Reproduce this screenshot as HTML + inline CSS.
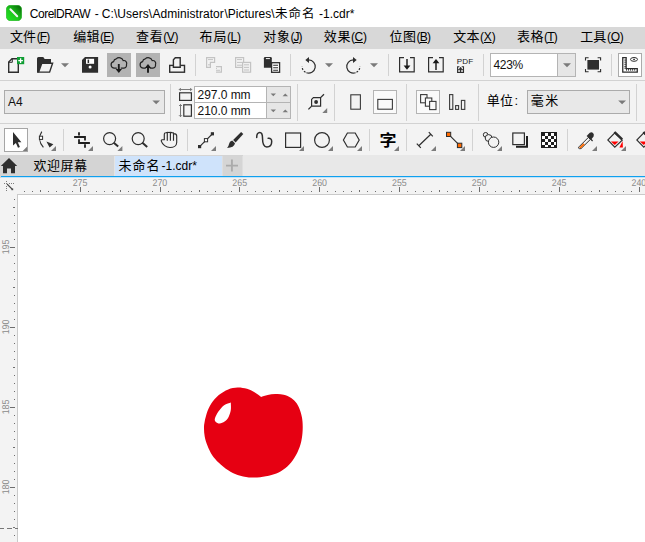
<!DOCTYPE html>
<html lang="zh">
<head>
<meta charset="utf-8">
<title>CorelDRAW</title>
<style>
*{box-sizing:border-box;margin:0;padding:0}
html,body{width:645px;height:542px;overflow:hidden;background:#fff}
body{position:relative;font-family:"Liberation Sans","Noto Sans CJK SC",sans-serif;color:#000}
.abs{position:absolute}
#title{left:0;top:0;width:645px;height:27px;background:#fff}
#title .t{position:absolute;top:6px;font-size:12px;line-height:16px;white-space:pre}
#menu{left:0;top:27px;width:645px;height:22px;background:#d8d8d8}
#menu span{position:absolute;white-space:pre}
#menu .c{top:1px;font-size:13px;line-height:18px}
#menu .l{top:1px;font-size:12px;line-height:18px}
#tb1{left:0;top:49px;width:645px;height:32px;background:#f3f3f3;border-bottom:1px solid #d2d2d2}
#pb{left:0;top:81px;width:645px;height:43px;background:#f3f3f3;border-bottom:1px solid #d2d2d2}
#tools{left:0;top:124px;width:645px;height:31px;background:#f3f3f3}
#tabs{left:0;top:155px;width:645px;height:23px;background:#d4d4d4}
#bl1{left:1px;top:176px;width:644px;height:1px;background:#0fa0ee}
#bl2{left:1px;top:177px;width:644px;height:1px;background:#c2e3f8}
#hruler{left:0;top:178px;width:645px;height:17px;background:#f3f3f3}
#vruler{left:0;top:195px;width:17px;height:347px;background:#f3f3f3}
#canvas{left:17px;top:194px;width:628px;height:348px;background:#fff;border-left:1px solid #cacaca;border-top:1px solid #cacaca}
.sep{position:absolute;width:1px;background:#c8c8c8}
svg{position:absolute;overflow:hidden}
.cj{font-size:13px;line-height:18px;white-space:pre}
</style>
</head>
<body>
<div id="title" class="abs">
  <svg style="left:6px;top:5px" width="16" height="16" viewBox="0 0 16 16"><defs><linearGradient id="lg" x1="0" y1="1" x2="1" y2="0"><stop offset="0" stop-color="#25e625"/><stop offset="0.45" stop-color="#1cc81c"/><stop offset="1" stop-color="#075a07"/></linearGradient></defs><rect x="0.3" y="0.3" width="15.4" height="15.4" rx="4.2" fill="url(#lg)" stroke="#1fae1f" stroke-width="0.6"/><path d="M4.4 4.3 L11.2 11.3" stroke="#f4f4f4" stroke-width="2" stroke-linecap="round"/></svg>
  <span class="t" style="left:29.8px;letter-spacing:-0.5px">CorelDRAW</span>
  <span class="t" style="left:94.8px">-</span>
  <span class="t" style="left:101.8px;letter-spacing:0.05px">C:\Users\</span>
  <span class="t" style="left:152.5px;letter-spacing:0.05px">Administrator</span>
  <span class="t" style="left:224.5px">\Pictures\</span>
  <span class="t" style="left:275px;font-size:12.5px;letter-spacing:0.95px">未命名</span>
  <span class="t" style="left:319.1px">-1.cdr*</span>
</div>
<div id="menu" class="abs">
  <span class="c" style="left:10.1px;letter-spacing:0.0px">文件</span><span class="l" style="left:36.7px;letter-spacing:-0.85px">(<u>F</u>)</span>
  <span class="c" style="left:73.3px;letter-spacing:0.1px">编辑</span><span class="l" style="left:100px;letter-spacing:-0.85px">(<u>E</u>)</span>
  <span class="c" style="left:136.1px;letter-spacing:0.6px">查看</span><span class="l" style="left:163.3px;letter-spacing:-0.45px">(<u>V</u>)</span>
  <span class="c" style="left:199.6px;letter-spacing:0.8px">布局</span><span class="l" style="left:227px;letter-spacing:-0.4px">(<u>L</u>)</span>
  <span class="c" style="left:263.2px;letter-spacing:0.8px">对象</span><span class="l" style="left:290.4px;letter-spacing:-1.0px">(<u>J</u>)</span>
  <span class="c" style="left:323.8px;letter-spacing:0.6px">效果</span><span class="l" style="left:351px;letter-spacing:-0.4px">(<u>C</u>)</span>
  <span class="c" style="left:389.5px;letter-spacing:0.6px">位图</span><span class="l" style="left:416.4px;letter-spacing:-0.7px">(<u>B</u>)</span>
  <span class="c" style="left:453.3px;letter-spacing:0.1px">文本</span><span class="l" style="left:480px;letter-spacing:-0.15px">(<u>X</u>)</span>
  <span class="c" style="left:517px;letter-spacing:0.5px">表格</span><span class="l" style="left:544.1px;letter-spacing:-0.8px">(<u>T</u>)</span>
  <span class="c" style="left:580.2px;letter-spacing:0.1px">工具</span><span class="l" style="left:607.1px;letter-spacing:-0.35px">(<u>O</u>)</span>
</div>
<div id="tb1" class="abs"></div>
<svg style="left:0;top:49px" width="645" height="32" viewBox="0 49 645 32">
  <g fill="none" stroke="#2e2e2e" stroke-width="1.4">
    <!-- new -->
    <path d="M12 58.7 H18.3 V72.2 H8.7 V62 Z" fill="#f3f3f3"/>
    <path d="M12.3 58.7 V62.3 H8.7" stroke-width="1"/>
    <rect x="17" y="57" width="7.2" height="7.2" fill="#0f9d33" stroke="none"/>
    <path d="M20.6 58.3 V62.9 M18.3 60.6 H22.9" stroke="#fff" stroke-width="1.3"/>
    <!-- open -->
    <path d="M37 72.8 V58.5 Q37 57 38.5 57 H42.5 Q43.7 57 44.2 58.2 L44.6 59 H51 V63 H42 L38.5 72.8 Z" fill="#2e2e2e" stroke="none"/>
    <path d="M41.8 63.2 H52.6 L49.6 72.1 H38.6 Z" fill="#f3f3f3" stroke-width="1.4"/>
    <!-- save -->
    <path d="M85 57 H98.1 V72.8 H82 V60 Z" fill="#2e2e2e" stroke="none"/>
    <rect x="86" y="58.8" width="8.1" height="5" fill="#fff" stroke="none"/>
    <rect x="87.6" y="59.6" width="1.5" height="3.4" fill="#2e2e2e" stroke="none"/>
    <circle cx="90.1" cy="66.9" r="1.5" fill="#fff" stroke="none"/>
  </g>
  <path d="M61 63.2 H69 L65 67.2 Z" fill="#7a7a7a"/>
  <!-- cloud buttons -->
  <rect x="107" y="53" width="24" height="24" fill="#b3b3b3"/>
  <rect x="136" y="53" width="24" height="24" fill="#b3b3b3"/>
  <g fill="none" stroke="#222" stroke-width="1.2" stroke-linecap="round">
    <path id="cloud" d="M116.4 68.1 H114.4 A3.3 3.3 0 0 1 113.6 61.6 A3.2 3.2 0 0 1 116.2 58.9 A4.3 4.3 0 0 1 123.2 60.6 A2.9 2.9 0 0 1 126.5 64.6 A3.1 3.1 0 0 1 123.9 68.1 H121.2"/>
    <path d="M145.4 68.1 H143.4 A3.3 3.3 0 0 1 142.6 61.6 A3.2 3.2 0 0 1 145.2 58.9 A4.3 4.3 0 0 1 152.2 60.6 A2.9 2.9 0 0 1 155.5 64.6 A3.1 3.1 0 0 1 152.9 68.1 H150.2"/>
  </g>
  <path d="M118.8 64 V70" stroke="#1a1a1a" stroke-width="1.9" fill="none"/>
  <path d="M115.6 69 H122 L118.8 73 Z" fill="#1a1a1a"/>
  <path d="M148 72.8 V67" stroke="#1a1a1a" stroke-width="1.9" fill="none"/>
  <path d="M144.8 68 H151.2 L148 63.9 Z" fill="#1a1a1a"/>
  <!-- print -->
  <g fill="#f3f3f3" stroke="#2e2e2e" stroke-width="1.4">
    <rect x="169.7" y="65.4" width="14.8" height="6.8"/>
    <path d="M175.3 57.7 H180.2 V67.3 H173.4 V59.8 Z"/>
  </g>
  <!-- seps -->
  <rect x="195" y="54" width="1" height="22" fill="#d2d2d2"/>
  <rect x="290" y="54" width="1" height="22" fill="#d2d2d2"/>
  <rect x="388" y="54" width="1" height="22" fill="#d2d2d2"/>
  <rect x="483" y="54" width="1" height="22" fill="#d2d2d2"/>
  <rect x="611" y="54" width="1" height="22" fill="#d2d2d2"/>
  <!-- cut (disabled) -->
  <g fill="none" stroke="#c3c3c3" stroke-width="1.2">
    <path d="M206.6 57.6 H214.6 V62.4 H210.4 V67.4 H206.6 Z"/>
    <path d="M208 59.6 H213 M208 64.8 H210" stroke-width="1"/>
    <path d="M216 66.6 H221.4 V72.2 H216" />
    <path d="M216 68.4 H217 M218 66.6 H219 M216 70.3 H220" stroke-width="1"/>
    <!-- copy disabled -->
    <rect x="235.6" y="57.6" width="8" height="9.8"/>
    <path d="M237 59.6 H242 M237 62.4 H242 M237 65.2 H242" stroke-width="1"/>
    <rect x="242.6" y="62.4" width="8" height="9.8" fill="#f0f0f0"/>
    <path d="M244 64.8 H249 M244 67.4 H249 M244 70 H249" stroke-width="1"/>
  </g>
  <!-- paste -->
  <path d="M263.9 67.7 V58.2 Q263.9 57 265.1 57 H270.6 Q271.8 57 271.8 58.2 V67.7 Z" fill="#2e2e2e"/>
  <rect x="265.9" y="58" width="4" height="1.1" fill="#e8e8e8"/>
  <rect x="271.6" y="62.7" width="8" height="9.6" fill="#fff" stroke="#2e2e2e" stroke-width="1.3"/>
  <path d="M273.2 65.2 H278 M273.2 67.7 H278 M273.2 70.2 H278" stroke="#2e2e2e" stroke-width="1.1"/>
  <!-- undo -->
  <g fill="none" stroke="#2e2e2e" stroke-width="1.2">
    <path d="M308.7 59.9 A6.6 6.6 0 1 1 306.4 72.7"/>
    <path d="M306.4 72.7 A6.6 6.6 0 0 1 302.1 66.3" stroke-dasharray="1.9 1.5" stroke-dashoffset="-1"/>
    <path d="M353.3 59.9 A6.6 6.6 0 1 0 355.6 72.7"/>
    <path d="M355.6 72.7 A6.6 6.6 0 0 0 359.9 66.3" stroke-dasharray="1.9 1.5" stroke-dashoffset="-1"/>
  </g>
  <path d="M309 56.9 V62.9 L305.3 59.9 Z" fill="#2e2e2e"/>
  <path d="M353 56.9 V62.9 L356.7 59.9 Z" fill="#2e2e2e"/>
  <path d="M325 63.2 H333 L329 67.2 Z" fill="#7a7a7a"/>
  <path d="M370 63.2 H378 L374 67.2 Z" fill="#7a7a7a"/>
  <!-- import / export -->
  <g fill="none" stroke="#2e2e2e" stroke-width="1.2">
    <path d="M404 57.6 H399.6 V71.8 H414.2 V57.6 H410"/>
    <path d="M433 57.6 H428.6 V71.8 H443.2 V57.6 H439"/>
    <path d="M407 59 V67" stroke-width="1.6"/>
    <path d="M436 70 V62" stroke-width="1.6"/>
  </g>
  <path d="M403.6 65.6 H410.4 L407 69.8 Z" fill="#1a1a1a"/>
  <path d="M432.6 63.2 H439.4 L436 59 Z" fill="#1a1a1a"/>
  <!-- PDF -->
  <text x="456.7" y="63.8" font-family="Liberation Sans, sans-serif" font-size="8.1" fill="#1a1a1a" letter-spacing="0.1">PDF</text>
  <path d="M459.4 66.7 H457.6 V72.4 H463.5 V66.7 H461.7 M457.6 69.8 H463.5" fill="none" stroke="#2e2e2e" stroke-width="1.1"/>
  <path d="M460.55 67.4 V72.4" fill="none" stroke="#2e2e2e" stroke-width="1.1"/>
  <path d="M458.5 69.4 L460.55 66.9 L462.6 69.4 Z" fill="#2e2e2e"/>
  <!-- zoom combo -->
  <rect x="490.5" y="53.5" width="85" height="23" fill="#fff" stroke="#b4b4b4" stroke-width="1"/>
  <rect x="557.5" y="53.5" width="18" height="23" fill="#e6e6e6" stroke="#b4b4b4" stroke-width="1"/>
  <path d="M563 63.2 H571 L567 67.2 Z" fill="#7a7a7a"/>
  <text x="493.5" y="69" font-family="Liberation Sans, sans-serif" font-size="12" fill="#111" letter-spacing="-0.3">423%</text>
  <!-- full screen -->
  <rect x="587.4" y="60" width="11.6" height="9.6" fill="#2e2e2e"/>
  <path d="M585.5 60.6 V57.8 H588.6 M597.6 57.8 H600.6 V60.6 M600.6 69 V71.8 H597.6 M588.6 71.8 H585.5 V69" fill="none" stroke="#2e2e2e" stroke-width="1.1"/>
  <!-- ruler button -->
  <rect x="618.5" y="53.5" width="23" height="23" fill="#fff" stroke="#ababab" stroke-width="1"/>
  <path d="M622.75 57.55 H626.15 V68.65 H637.25 V72.15 H622.75 Z" fill="#fff" stroke="#2e2e2e" stroke-width="1.3"/>
  <path d="M624.3 60.1 H626 M624.3 62.2 H626 M624.3 64.3 H626 M624.3 66.4 H626 M624.3 68.2 H626 M626.5 68.8 V70.7 M628.5 68.8 V70.7 M630.6 68.8 V70.7 M632.6 68.8 V70.7 M634.7 68.8 V70.7" stroke="#2e2e2e" stroke-width="0.9" fill="none"/>
  <ellipse cx="634" cy="59.4" rx="3.5" ry="1.9" fill="#fff" stroke="#2e2e2e" stroke-width="1"/>
  <rect x="633.2" y="58.8" width="1.7" height="1.2" fill="#2e2e2e"/>
</svg>
<div id="pb" class="abs"></div>
<svg style="left:0;top:81px" width="645" height="42" viewBox="0 81 645 42">
  <!-- A4 combo -->
  <rect x="4.5" y="90.5" width="160" height="23" fill="#e8e8e8" stroke="#ababab" stroke-width="1"/>
  <text x="8" y="106.3" font-family="Liberation Sans, sans-serif" font-size="12" fill="#111">A4</text>
  <path d="M152.4 100.4 H160 L156.2 104.2 Z" fill="#7a7a7a"/>
  <!-- seps -->
  <rect x="170" y="84" width="1" height="37" fill="#d2d2d2"/>
  <rect x="297" y="84" width="1" height="37" fill="#d2d2d2"/>
  <rect x="334" y="84" width="1" height="37" fill="#d2d2d2"/>
  <rect x="406" y="84" width="1" height="37" fill="#d2d2d2"/>
  <rect x="478" y="84" width="1" height="37" fill="#d2d2d2"/>
  <rect x="636" y="84" width="1" height="37" fill="#d2d2d2"/>
  <!-- w/h icons -->
  <g fill="none" stroke="#6a6a6a" stroke-width="0.9">
    <path d="M179.4 89.5 H191.6 M180.8 88 L179.3 89.5 L180.8 91 M190.2 88 L191.7 89.5 L190.2 91"/>
    <path d="M180.5 104.6 V116.6 M179 106 L180.5 104.5 L182 106 M179 115.2 L180.5 116.7 L182 115.2"/>
  </g>
  <g fill="none" stroke="#333" stroke-width="1.2">
    <rect x="179.6" y="92.8" width="11.8" height="7.6"/>
    <rect x="183.8" y="104.8" width="7.6" height="11.4"/>
  </g>
  <!-- fields -->
  <rect x="194.5" y="86.5" width="96" height="16" fill="#fff" stroke="#b4b4b4" stroke-width="1"/>
  <rect x="194.5" y="102.5" width="96" height="16" fill="#fff" stroke="#b4b4b4" stroke-width="1"/>
  <rect x="266.5" y="86.5" width="24" height="16" fill="#e6e6e6" stroke="#b4b4b4" stroke-width="1"/>
  <rect x="266.5" y="102.5" width="24" height="16" fill="#e6e6e6" stroke="#b4b4b4" stroke-width="1"/>
  <path d="M270.6 93.4 H276 L273.3 96.2 Z M282.6 96.2 H288 L285.3 93.4 Z M270.6 109.4 H276 L273.3 112.2 Z M282.6 112.2 H288 L285.3 109.4 Z" fill="#7a7a7a"/>
  <text x="197.6" y="99" font-family="Liberation Sans, sans-serif" font-size="12" fill="#111" letter-spacing="-0.05">297.0 mm</text>
  <text x="197.6" y="115" font-family="Liberation Sans, sans-serif" font-size="12" fill="#111" letter-spacing="-0.05">210.0 mm</text>
  <!-- page frame icon -->
  <g fill="none" stroke="#2e2e2e" stroke-width="1.2">
    <path d="M313.4 97.6 H320.6 V106.2 H311.6 V99.4 Z"/>
    <path d="M308.4 109.4 L311.4 106.4 M320.8 97.4 L324 94.2" stroke-width="1.3"/>
  </g>
  <circle cx="316.1" cy="102" r="1.9" fill="#2e2e2e"/>
  <path d="M327.2 108 V112.9 H322.3 Z" fill="#7c7c7c"/>
  <!-- portrait -->
  <rect x="350.8" y="94.8" width="9.6" height="14.4" fill="none" stroke="#3a3a3a" stroke-width="1.1"/>
  <!-- landscape (active) -->
  <rect x="373.5" y="90.5" width="23" height="23" fill="#fafafa" stroke="#b4b4b4" stroke-width="1"/>
  <rect x="377.8" y="99.4" width="14.6" height="9.8" fill="none" stroke="#3a3a3a" stroke-width="1.1"/>
  <!-- all pages (active) -->
  <rect x="416.5" y="90.5" width="23" height="23" fill="#fafafa" stroke="#b4b4b4" stroke-width="1"/>
  <g fill="#fafafa" stroke="#3a3a3a" stroke-width="1.1">
    <rect x="420.6" y="94.6" width="6.4" height="8.2"/>
    <rect x="425.4" y="98" width="6.4" height="8.2"/>
    <rect x="429.6" y="101.4" width="6.4" height="8.2"/>
  </g>
  <!-- current page -->
  <g fill="none" stroke="#3a3a3a" stroke-width="1.1">
    <rect x="449.6" y="94.6" width="3.2" height="14.8"/>
    <rect x="455.6" y="105.6" width="3" height="3.8"/>
    <rect x="461.4" y="100.4" width="3.4" height="9"/>
  </g>
  <!-- units -->
  <rect x="527.5" y="90.5" width="102" height="23" fill="#e8e8e8" stroke="#ababab" stroke-width="1"/>
  <path d="M618.2 100.4 H626 L622.1 104.2 Z" fill="#7a7a7a"/>
</svg>
<span class="abs cj" style="left:486.8px;top:92px;letter-spacing:0.3px">单位</span><span class="abs cj" style="left:514.4px;top:92px">:</span>
<span class="abs cj" style="left:530.8px;top:92px;letter-spacing:1.4px">毫米</span>
<div id="tools" class="abs"></div>
<svg style="left:0;top:123px" width="645" height="32" viewBox="0 123 645 32">
  <!-- pick -->
  <rect x="4.5" y="128.5" width="23" height="23" fill="#fff" stroke="#a6a6a6" stroke-width="1"/>
  <path d="M13 132 V145.6 L15.9 143 L18 147.8 L19.9 146.9 L17.8 142.2 H21.4 Z" fill="#2e2e2e"/>
  <path d="M27.2 146.6 V151.1 H22.7 Z" fill="#7c7c7c"/>
  <!-- shape -->
  <path d="M41.8 131.6 Q36.6 139.5 43.4 147.4" fill="none" stroke="#2e2e2e" stroke-width="1.1"/>
  <rect x="39.4" y="136.2" width="3.2" height="3.2" fill="#fff" stroke="#2e2e2e" stroke-width="1"/>
  <path d="M46.4 141.6 L53.4 144.2 L49.6 147.6 Z" fill="#2e2e2e"/>
  <path d="M56.0 146 V151 H51.0 Z" fill="#7c7c7c"/>
  <!-- seps -->
  <rect x="63" y="129" width="1" height="22" fill="#d2d2d2"/>
  <rect x="187" y="129" width="1" height="22" fill="#d2d2d2"/>
  <rect x="369" y="129" width="1" height="22" fill="#d2d2d2"/>
  <rect x="406" y="129" width="1" height="22" fill="#d2d2d2"/>
  <rect x="472" y="129" width="1" height="22" fill="#d2d2d2"/>
  <rect x="567" y="129" width="1" height="22" fill="#d2d2d2"/>
  <!-- crop -->
  <path d="M74.1 137 H85 V140.6 M79 132.2 V135.6 M79 139.2 V143 H89.9 M85 144.2 V147.7" fill="none" stroke="#1f1f1f" stroke-width="1.8"/>
  <path d="M93.0 146 V151 H88.0 Z" fill="#7c7c7c"/>
  <!-- zoom -->
  <g fill="none" stroke="#2e2e2e">
    <circle cx="109.6" cy="138.6" r="6" stroke-width="1.2"/>
    <path d="M113.8 142.8 L118.2 146.6" stroke-width="2"/>
    <circle cx="138.2" cy="138.6" r="6" stroke-width="1.2"/>
    <path d="M142.4 142.8 L147.2 147" stroke-width="2"/>
  </g>
  <path d="M122.4 146 V151 H117.4 Z" fill="#7c7c7c"/>
  <!-- hand -->
  <path d="M162.2 139.7 H164.3 V134.2 Q164.3 132.7 165.8 132.7 Q167.3 132.3 168.9 132.5 Q170.4 132.2 172 132.6 Q173.6 132.6 173.9 133.6 Q176.7 133.6 176.7 136 V142.4 C176.7 145.8 173.4 147.5 170 147.5 C166 147.5 162.5 144.6 161.4 141.4 Q160.9 140 162.2 139.7 Z M167.3 133 V140.7 M170.4 132.8 V140.7 M173.5 133.2 V140.7" fill="none" stroke="#2e2e2e" stroke-width="1.15" stroke-linejoin="round"/>
  <!-- freehand -->
  <path d="M199.6 146.6 L212.4 133.8" stroke="#2e2e2e" stroke-width="1.2" fill="none"/>
  <rect x="198" y="145" width="3.2" height="3.2" fill="#2e2e2e"/>
  <rect x="210.8" y="132.2" width="3.2" height="3.2" fill="#2e2e2e"/>
  <rect x="204.4" y="138.6" width="3.2" height="3.2" fill="#fff" stroke="#2e2e2e" stroke-width="1"/>
  <path d="M216.0 146 V151 H211.0 Z" fill="#7c7c7c"/>
  <!-- brush -->
  <path d="M241.1 132.1 L243.3 134 L235.6 142.4 L233.1 140 Z" fill="#2e2e2e"/>
  <path d="M232.2 140.5 L235 143.3 Q234.6 145.6 232.6 146.8 Q230.4 147.9 227.1 147.9 Q228.8 146 229.1 143.8 Q229.4 141.4 232.2 140.5 Z" fill="#2e2e2e"/>
  <!-- S curve -->
  <path d="M256.7 137.6 C256.6 134 258 132.5 259.8 132.5 C262 132.5 262.5 134.4 262.5 138 C262.5 143 263.4 146.9 266.8 146.9 C270 146.9 271.7 144.4 271.7 141.4 C271.7 139.4 270.6 138 268.2 138.3" fill="none" stroke="#2e2e2e" stroke-width="1.5" stroke-linecap="round"/>
  <!-- rectangle -->
  <rect x="285.6" y="133" width="15" height="14.4" fill="none" stroke="#2e2e2e" stroke-width="1.2"/>
  <path d="M304 146 V151 H299.0 Z" fill="#7c7c7c"/>
  <!-- ellipse -->
  <circle cx="322" cy="140" r="7.4" fill="none" stroke="#2e2e2e" stroke-width="1.2"/>
  <path d="M333.0 146 V151 H328.0 Z" fill="#7c7c7c"/>
  <!-- polygon -->
  <path d="M343.4 140 L347.4 133 H355.2 L359.2 140 L355.2 147 H347.4 Z" fill="none" stroke="#2e2e2e" stroke-width="1.2"/>
  <path d="M362.0 146 V151 H357.0 Z" fill="#7c7c7c"/>
  <!-- text -->
  <path d="M399.0 146 V151 H394.0 Z" fill="#7c7c7c"/>
  <!-- dimension -->
  <path d="M418.8 145.8 L430.8 134.2 M416.8 143.6 L420.8 147.8 M428.8 132.2 L432.8 136.4" fill="none" stroke="#2e2e2e" stroke-width="1.2"/>
  <path d="M436.0 146 V151 H431.0 Z" fill="#7c7c7c"/>
  <!-- connector -->
  <path d="M448.6 134.4 L459.6 145.4" stroke="#2e2e2e" stroke-width="1.2" fill="none"/>
  <rect x="446.5" y="132.3" width="4.2" height="4.2" fill="#ff6a00" stroke="#2e2e2e" stroke-width="1"/>
  <rect x="457.4" y="143.2" width="4.4" height="4.4" fill="#ff6a00" stroke="#2e2e2e" stroke-width="1"/>
  <path d="M465.0 146 V151 H460.0 Z" fill="#7c7c7c"/>
  <!-- blend -->
  <g fill="#f3f3f3" stroke="#2e2e2e" stroke-width="1">
    <circle cx="485.6" cy="134.8" r="2.3"/>
    <circle cx="488.6" cy="138" r="3.4"/>
    <circle cx="493.6" cy="142.2" r="5.2"/>
  </g>
  <path d="M502.0 146 V151 H497.0 Z" fill="#7c7c7c"/>
  <!-- shadow -->
  <path d="M516 146.8 H527 V136" fill="none" stroke="#1f1f1f" stroke-width="2"/>
  <rect x="512.8" y="133" width="11.6" height="11.6" fill="#f3f3f3" stroke="#2e2e2e" stroke-width="1.2"/>
  <!-- transparency -->
  <rect x="541" y="132" width="16" height="16" fill="#1f1f1f"/>
  <path d="M545 133 H548 V136 H545 Z M551 133 H554 V136 H551 Z M542 136 H545 V139 H542 Z M548 136 H551 V139 H548 Z M554 136 H556 V139 H554 Z M545 139 H548 V142 H545 Z M551 139 H554 V142 H551 Z M542 142 H545 V145 H542 Z M548 142 H551 V145 H548 Z M554 142 H556 V145 H554 Z M545 145 H548 V147 H545 Z M551 145 H554 V147 H551 Z" fill="#fff"/>
  <!-- eyedropper -->
  <path d="M579 146.8 L588.4 137.4 L590.4 139.4 L581 148.6 Q579.4 149 578.6 148.2 Q578.2 147.4 579 146.8 Z" fill="#f3f3f3" stroke="#2e2e2e" stroke-width="1"/>
  <path d="M579.2 147.4 L583.4 143.2 L584.8 144.6 L580.6 148.6 Z" fill="#ff6a00"/>
  <path d="M586.6 136 L592.2 141.4 L593 140.6 L591.6 139 L593.6 136.4 Q594.4 134.4 593 133 Q591.6 131.8 589.8 132.8 L587.8 134.8 L587.4 135.2 Z" fill="#2e2e2e"/>
  <path d="M597.0 146 V151 H592.0 Z" fill="#7c7c7c"/>
  <!-- fill -->
  <path d="M614.6 133 L622.2 140.2 L614.8 147.2 L607.8 140 Z" fill="#f3f3f3" stroke="#2e2e2e" stroke-width="1.1"/>
  <path d="M610.8 141.4 H618.6 L614.8 145 Z" fill="#ff0000"/>
  <path d="M613.6 132.6 L615.4 131.2 L623 138.6 L621.6 140.4 Z" fill="#2e2e2e"/>
  <path d="M622.6 141 L622.9 147.6 H619.4 Z" fill="#ff0000"/>
  <path d="M626.0 146 V151 H621.0 Z" fill="#7c7c7c"/>
  <!-- smart fill (cut off) -->
  <path d="M643.6 133 L651 140.2 L643.8 147.2 L636.8 140 Z" fill="#f3f3f3" stroke="#2e2e2e" stroke-width="1.1"/>
  <path d="M639.8 141.4 H647.6 L643.8 145 Z" fill="#ff0000"/>
  <path d="M642.6 132.6 L644.4 131.2 L652 138.6 L650.6 140.4 Z" fill="#2e2e2e"/>
</svg>
<span class="abs" style="left:379.5px;top:129.3px;font-size:17px;line-height:20px;font-weight:700;font-family:'Noto Sans CJK SC',sans-serif;transform:scaleY(0.94);transform-origin:0 50%">字</span>
<div id="tabs" class="abs"></div>
<div class="abs" style="left:114px;top:156px;width:108px;height:20px;background:#cfe3fb;border-left:1px solid #e4e4e4"></div>
<div class="abs" style="left:222px;top:156px;width:21px;height:20px;background:#d5d5d5;border-left:1px solid #dedede;border-right:1px solid #dedede"></div>
<div class="abs" style="left:243px;top:155px;width:402px;height:21px;background:#e8e8e8"></div>
<svg style="left:0;top:155px" width="645" height="21" viewBox="0 155 645 21">
  <path d="M9 158 L17.2 166 H15 V173.2 H11 V168.4 H7 V173.2 H3 V166 H0.8 Z" fill="#2e2e2e"/>
  <path d="M231.9 159.6 V171.6 M226 165.6 H238" stroke="#ababab" stroke-width="1.9" fill="none"/>
</svg>
<div id="bl1" class="abs"></div><div id="bl2" class="abs"></div>
<span class="abs cj" style="left:33.6px;top:156.6px;letter-spacing:0.5px">欢迎屏幕</span>
<span class="abs cj" style="left:118.4px;top:156.6px;letter-spacing:1px">未命名</span>
<span class="abs" style="left:161.6px;top:157.5px;font-size:12px;line-height:16px;white-space:pre">-1.cdr*</span>
<div id="hruler" class="abs"></div>
<svg style="left:0;top:178px" width="645" height="17" viewBox="0 178 645 17">
  <path d="M4 183 h1 v1 h-1Z M9 183 h1 v1 h-1Z M11 183 h1 v1 h-1Z M13 183 h1 v1 h-1Z M6 181 h1 v1 h-1Z M6 183 h1 v1 h-1Z M6 186 h1 v1 h-1Z M6 188 h1 v1 h-1Z M6 190 h1 v1 h-1Z" fill="#7d7d7d"/>
  <path d="M7 184 L12 189" stroke="#4a4a4a" stroke-width="1.1" fill="none"/>
  <rect x="11.4" y="188.4" width="1.8" height="1.8" fill="#4a4a4a"/>
  <path d="M24 191 h1 v1 h-1Z M32 191 h1 v1 h-1Z M40 190 h1 v2 h-1Z M48 191 h1 v1 h-1Z M56 191 h1 v1 h-1Z M64 191 h1 v1 h-1Z M72 191 h1 v1 h-1Z M80 187 h1 v5 h-1Z M88 191 h1 v1 h-1Z M96 191 h1 v1 h-1Z M104 191 h1 v1 h-1Z M112 191 h1 v1 h-1Z M120 190 h1 v2 h-1Z M128 191 h1 v1 h-1Z M136 191 h1 v1 h-1Z M144 191 h1 v1 h-1Z M152 191 h1 v1 h-1Z M160 187 h1 v5 h-1Z M168 191 h1 v1 h-1Z M176 191 h1 v1 h-1Z M184 191 h1 v1 h-1Z M191 191 h1 v1 h-1Z M199 190 h1 v2 h-1Z M207 191 h1 v1 h-1Z M215 191 h1 v1 h-1Z M223 191 h1 v1 h-1Z M231 191 h1 v1 h-1Z M239 187 h1 v5 h-1Z M247 191 h1 v1 h-1Z M255 191 h1 v1 h-1Z M263 191 h1 v1 h-1Z M271 191 h1 v1 h-1Z M279 190 h1 v2 h-1Z M287 191 h1 v1 h-1Z M295 191 h1 v1 h-1Z M303 191 h1 v1 h-1Z M311 191 h1 v1 h-1Z M319 187 h1 v5 h-1Z M327 191 h1 v1 h-1Z M335 191 h1 v1 h-1Z M343 191 h1 v1 h-1Z M351 191 h1 v1 h-1Z M359 190 h1 v2 h-1Z M367 191 h1 v1 h-1Z M375 191 h1 v1 h-1Z M383 191 h1 v1 h-1Z M391 191 h1 v1 h-1Z M399 187 h1 v5 h-1Z M407 191 h1 v1 h-1Z M415 191 h1 v1 h-1Z M423 191 h1 v1 h-1Z M431 191 h1 v1 h-1Z M439 190 h1 v2 h-1Z M447 191 h1 v1 h-1Z M455 191 h1 v1 h-1Z M463 191 h1 v1 h-1Z M471 191 h1 v1 h-1Z M479 187 h1 v5 h-1Z M487 191 h1 v1 h-1Z M495 191 h1 v1 h-1Z M503 191 h1 v1 h-1Z M511 191 h1 v1 h-1Z M519 190 h1 v2 h-1Z M527 191 h1 v1 h-1Z M535 191 h1 v1 h-1Z M543 191 h1 v1 h-1Z M551 191 h1 v1 h-1Z M559 187 h1 v5 h-1Z M567 191 h1 v1 h-1Z M575 191 h1 v1 h-1Z M583 191 h1 v1 h-1Z M591 191 h1 v1 h-1Z M599 190 h1 v2 h-1Z M607 191 h1 v1 h-1Z M615 191 h1 v1 h-1Z M623 191 h1 v1 h-1Z M631 191 h1 v1 h-1Z M639 187 h1 v5 h-1Z" fill="#6e6e6e"/>
  <g font-family="Liberation Sans, sans-serif" font-size="9.8" fill="#8a8a8a" text-anchor="middle" text-rendering="geometricPrecision">
    <text transform="translate(80.0 186) scale(0.9 1)">275</text>
    <text transform="translate(159.9 186) scale(0.9 1)">270</text>
    <text transform="translate(239.7 186) scale(0.9 1)">265</text>
    <text transform="translate(319.6 186) scale(0.9 1)">260</text>
    <text transform="translate(399.4 186) scale(0.9 1)">255</text>
    <text transform="translate(479.2 186) scale(0.9 1)">250</text>
    <text transform="translate(559.1 186) scale(0.9 1)">245</text>
    <text transform="translate(638.9 186) scale(0.9 1)">240</text>
  </g>
</svg>
<div id="vruler" class="abs"></div>
<svg style="left:0;top:195px;z-index:3" width="18" height="347" viewBox="0 195 18 347">
  <path d="M14 199 h1 v1 h-1Z M13 207 h2 v1 h-2Z M14 215 h1 v1 h-1Z M14 223 h1 v1 h-1Z M14 231 h1 v1 h-1Z M14 239 h1 v1 h-1Z M10 247 h5 v1 h-5Z M14 255 h1 v1 h-1Z M14 263 h1 v1 h-1Z M14 271 h1 v1 h-1Z M14 279 h1 v1 h-1Z M13 287 h2 v1 h-2Z M14 295 h1 v1 h-1Z M14 303 h1 v1 h-1Z M14 311 h1 v1 h-1Z M14 319 h1 v1 h-1Z M10 327 h5 v1 h-5Z M14 335 h1 v1 h-1Z M14 343 h1 v1 h-1Z M14 351 h1 v1 h-1Z M14 359 h1 v1 h-1Z M13 367 h2 v1 h-2Z M14 375 h1 v1 h-1Z M14 383 h1 v1 h-1Z M14 391 h1 v1 h-1Z M14 399 h1 v1 h-1Z M10 407 h5 v1 h-5Z M14 415 h1 v1 h-1Z M14 423 h1 v1 h-1Z M14 431 h1 v1 h-1Z M14 439 h1 v1 h-1Z M13 447 h2 v1 h-2Z M14 455 h1 v1 h-1Z M14 463 h1 v1 h-1Z M14 471 h1 v1 h-1Z M14 479 h1 v1 h-1Z M10 487 h5 v1 h-5Z M14 495 h1 v1 h-1Z M14 503 h1 v1 h-1Z M14 511 h1 v1 h-1Z M14 519 h1 v1 h-1Z M13 527 h2 v1 h-2Z M14 535 h1 v1 h-1Z" fill="#6e6e6e"/>
  <g font-family="Liberation Sans, sans-serif" font-size="9.8" fill="#8a8a8a" text-anchor="middle" text-rendering="geometricPrecision">
    <text transform="translate(9 247) rotate(-90) scale(0.9 1)">195</text>
    <text transform="translate(9 327) rotate(-90) scale(0.9 1)">190</text>
    <text transform="translate(9 407) rotate(-90) scale(0.9 1)">185</text>
    <text transform="translate(9 487) rotate(-90) scale(0.9 1)">180</text>
  </g>
  <path d="M0 528 h4 v1 h-4Z M7 528 h5 v1 h-5Z M13 527 h2 v1 h-2Z M15 528 h3 v1 h-3Z" fill="#777"/>
</svg>
<div id="canvas" class="abs"></div>
<svg style="left:18px;top:195px" width="627" height="347" viewBox="18 195 627 347">
  <path d="M261.1 396.9 C260.0 396.1 256.9 393.6 254.5 392.2 C252.2 390.9 249.8 389.6 247.0 388.8 C244.2 388.1 240.7 387.4 237.6 387.5 C234.5 387.6 231.3 388.1 228.2 389.4 C225.1 390.7 221.6 392.7 218.8 395.0 C216.0 397.4 213.3 400.4 211.3 403.5 C209.2 406.6 207.8 410.2 206.6 413.8 C205.4 417.5 204.5 421.4 204.1 425.1 C203.8 428.9 204.1 433.0 204.7 436.4 C205.3 439.9 206.3 442.7 207.5 445.8 C208.8 448.9 210.3 452.4 212.2 455.2 C214.1 458.0 216.1 460.2 218.8 462.7 C221.5 465.2 225.1 468.2 228.2 470.3 C231.3 472.3 234.2 473.8 237.6 475.0 C241.1 476.2 245.1 477.0 248.9 477.4 C252.7 477.8 256.4 477.6 260.2 477.2 C263.9 476.8 268.0 476.0 271.5 475.0 C274.9 474.0 277.9 472.9 280.9 471.2 C283.8 469.5 286.8 467.3 289.3 464.6 C291.8 462.0 294.0 458.7 295.9 455.2 C297.8 451.8 299.5 447.7 300.6 443.9 C301.7 440.2 302.2 436.4 302.5 432.7 C302.8 428.9 302.8 424.8 302.5 421.4 C302.2 417.9 301.5 414.9 300.6 412.0 C299.7 409.0 298.4 405.9 296.8 403.5 C295.3 401.2 293.4 399.3 291.2 397.9 C289.0 396.4 286.3 395.3 283.7 394.7 C281.0 394.0 277.9 394.0 275.2 394.1 C272.6 394.2 270.0 394.6 267.7 395.0 C265.3 395.5 262.2 396.6 261.1 396.9Z" fill="#e60012"/>
  <path d="M230.8 402.4 C229.7 402.8 226.1 403.7 224.1 405.2 C222.0 406.7 220.0 409.4 218.4 411.6 C216.9 413.8 215.3 416.8 214.9 418.5 C214.4 420.3 215.0 421.1 215.8 421.9 C216.6 422.7 218.3 423.5 219.7 423.4 C221.2 423.4 223.2 422.7 224.6 421.6 C226.1 420.5 227.5 418.8 228.6 416.9 C229.6 414.9 230.5 412.5 230.8 410.1 C231.2 407.7 230.8 403.7 230.8 402.4Z" fill="#fff"/>
</svg>
</body>
</html>
